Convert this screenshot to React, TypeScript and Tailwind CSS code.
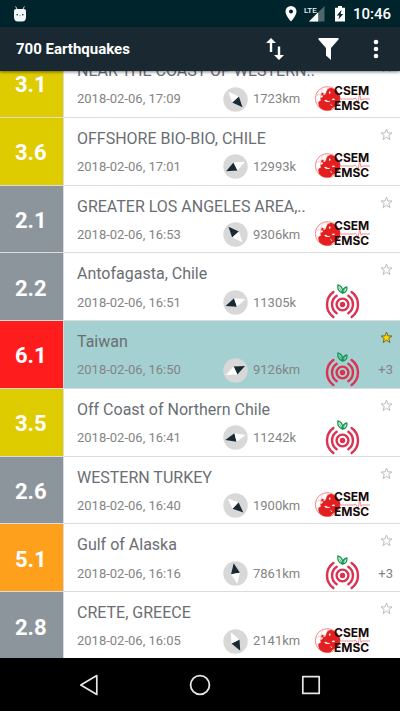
import React from "react";

type Source = "emsc" | "tomato";

interface Quake {
  mag: string;
  color: string;
  place: string;
  time: string;
  bearing: number;
  distance: string;
  source: Source;
  more?: string;
  starred?: boolean;
}

const YELLOW = "bg-[#dfcc00]";
const GRAY = "bg-[#8d959c]";
const RED = "bg-[#ff1c1c]";
const ORANGE = "bg-[#ffa01c]";

const quakes: Quake[] = [
  { mag: "3.1", color: YELLOW, place: "NEAR THE COAST OF WESTERN..", time: "2018-02-06, 17:09", bearing: 138, distance: "1723km", source: "emsc" },
  { mag: "3.6", color: YELLOW, place: "OFFSHORE BIO-BIO, CHILE", time: "2018-02-06, 17:01", bearing: 243, distance: "12993k", source: "emsc" },
  { mag: "2.1", color: GRAY, place: "GREATER LOS ANGELES AREA,..", time: "2018-02-06, 16:53", bearing: 318, distance: "9306km", source: "emsc" },
  { mag: "2.2", color: GRAY, place: "Antofagasta, Chile", time: "2018-02-06, 16:51", bearing: 251, distance: "11305k", source: "tomato" },
  { mag: "6.1", color: RED, place: "Taiwan", time: "2018-02-06, 16:50", bearing: 65, distance: "9126km", source: "tomato", more: "+3", starred: true },
  { mag: "3.5", color: YELLOW, place: "Off Coast of Northern Chile", time: "2018-02-06, 16:41", bearing: 256, distance: "11242k", source: "tomato" },
  { mag: "2.6", color: GRAY, place: "WESTERN TURKEY", time: "2018-02-06, 16:40", bearing: 132, distance: "1900km", source: "emsc" },
  { mag: "5.1", color: ORANGE, place: "Gulf of Alaska", time: "2018-02-06, 16:16", bearing: 350, distance: "7861km", source: "tomato", more: "+3" },
  { mag: "2.8", color: GRAY, place: "CRETE, GREECE", time: "2018-02-06, 16:05", bearing: 153, distance: "2141km", source: "emsc" },
];

function Compass({ bearing }: { bearing: number }) {
  return (
    <svg width="25" height="25" viewBox="0 0 25 25" className="shrink-0" aria-hidden="true">
      <circle cx="12.5" cy="12.5" r="12.2" fill="#d8d8d8" />
      <g transform={`rotate(${bearing} 12.5 12.5)`}>
        <path d="M8 12.5 12.5 2 17 12.5Z" fill="#1a2a35" />
        <path d="M8 12.5 12.5 23 17 12.5Z" fill="#fff" />
      </g>
    </svg>
  );
}

function EmscLogo() {
  return (
    <svg width="56" height="27" viewBox="0 0 56 27" className="overflow-visible" role="img" aria-label="CSEM EMSC">
      <circle cx="12.3" cy="12.6" r="12" fill="none" stroke="#f08080" strokeWidth="0.9" />
      <path d="M1 9.5C7 7 18 6 24 8M.6 15.5C6 18 16 19 23 17M8 2C4.5 8 4.5 18 9 24.5M12.3 1V25" fill="none" stroke="#f5aaaa" strokeWidth="0.6" />
      <path
        d="M11.5 5 13 2.8 16 1.8 19 3 22 5 24.5 8.5 25.4 12 25 14.5 23 18.4 21 18.6 20.4 20.5 17.5 22 15.6 24.2 11.5 24.6 8.5 24 5.8 22.6 4 20.5 3.2 17.5 3.8 15.4 6 14.5 5.4 12 7.6 11 8.3 9 10.2 8.4 11 7Z"
        fill="#e3201f"
      />
      <path d="M6.5 7.2 8 6.4 8.8 8.2 7.6 9.8 6.2 9.6Z" fill="#e3201f" />
      <path d="M13.8 6.8 14.8 5 15.6 6.4 14.8 8.2ZM9 14.6 11 13.8 13 15.2 15 14.8 14.4 15.9 11.6 16.1ZM16.6 13.1 19 12.4 20.2 13.4 18 14.2ZM14.8 17.4 17.4 19.6 16.6 20Z" fill="#fff" />
      <path d="M24.5 13H39l1.2-1 1.3 1.4L43 18l1.6-10.5 1.4 6.7 1-1.2H55" fill="none" stroke="#ee7474" strokeWidth="0.8" />
      <g fill="#170a0a" fontFamily="Inter, 'Liberation Sans', sans-serif" fontSize="12" fontWeight="700">
        <text x="19" y="9">CSEM</text>
        <text x="19" y="24">EMSC</text>
      </g>
    </svg>
  );
}

function TomatoLogo() {
  return (
    <svg width="36" height="36" viewBox="0 0 36 36" role="img" aria-label="Earthquake network">
      <g fill="none" stroke="#dc3150" strokeWidth="2.4" strokeLinecap="round">
        <circle cx="17.5" cy="20.5" r="5.9" />
        <path d="M11.7 11.8A10.5 10.5 0 0 0 11.7 29.2" />
        <path d="M23.3 11.8A10.5 10.5 0 0 1 23.3 29.2" />
        <path d="M8.4 8A15.4 15.4 0 0 0 8.4 33" />
        <path d="M26.6 8A15.4 15.4 0 0 1 26.6 33" />
      </g>
      <circle cx="17.5" cy="20.5" r="2.7" fill="#dc3150" />
      <g fill="none" stroke="#16964f" strokeWidth="1.3" strokeLinejoin="round" strokeLinecap="round">
        <path d="M17.3 9C13.1 7.4 12.5 3.8 12.9.8c3.2 1 5.2 4 4.4 8.2Z" />
        <path d="M17.5 9C17.5 5.4 19.1 3.4 21.9 2.8c.5 3.2-.8 5.6-4.4 6.2Z" />
        <path d="M14.5 3.8l2.6 4.8M20.3 4.6 17.7 8.8" strokeWidth="0.7" />
      </g>
    </svg>
  );
}

function Star({ on }: { on?: boolean }) {
  return (
    <svg width="13" height="13" viewBox="0 0 13 13" aria-hidden="true">
      <path
        d="M6.5 1 7.9 4.9 12 5 8.8 7.5 9.9 11.6 6.5 9.2 3.1 11.6 4.2 7.5 1 5 5.1 4.9Z"
        fill={on ? "#ffd600" : "none"}
        stroke={on ? "#6e6a2c" : "#bcbcbc"}
        strokeWidth="1"
      />
    </svg>
  );
}

function QuakeRow({ q }: { q: Quake }) {
  return (
    <li className={`flex border-b border-[#dcdcdc] ${q.starred ? "bg-[#a4d0d1]" : "bg-white"}`}>
      <div className={`flex w-16 shrink-0 items-center border-r border-[#dcdcdc] pl-[15px] pt-1 text-[22px] leading-6 font-bold text-white ${q.color}`}>
        {q.mag}
      </div>
      <div className="min-w-0 flex-1 pt-2.5 pr-[7px] pl-[13px]">
        <div className="flex h-[22px] items-start justify-between">
          <h2 className="text-base leading-[22px] whitespace-nowrap text-[#6a6e73]">{q.place}</h2>
          <button type="button" aria-label="Favourite" aria-pressed={!!q.starred} className="shrink-0">
            <Star on={q.starred} />
          </button>
        </div>
        <div className="flex h-[34px] items-center text-[13px] text-[#848484]">
          <time className="w-[146px] shrink-0">{q.time}</time>
          <Compass bearing={q.bearing} />
          <span className="ml-[5px] w-[62px] shrink-0">{q.distance}</span>
          <span className="flex w-[55px] shrink-0 justify-center">
            {q.source === "emsc" ? <EmscLogo /> : <TomatoLogo />}
          </span>
          <span className="ml-auto">{q.more}</span>
        </div>
      </div>
    </li>
  );
}

function StatusBar() {
  return (
    <div className="flex h-[27px] shrink-0 items-center bg-[#00242c] pr-[9px] pl-[13px] text-white">
      <svg width="14" height="16" viewBox="0 0 14 16" aria-hidden="true">
        <path d="M2.6.4 4 3M11.4.4 10 3" stroke="#c8d4d6" strokeWidth="1" />
        <path d="M1 5Q1 3 3 3H11Q13 3 13 5V11Q13 15.6 9 15.6H5Q1 15.6 1 11Z" fill="#f2f6f6" />
        <circle cx="4.2" cy="8.8" r="0.8" fill="#00242c" />
        <circle cx="9.8" cy="8.8" r="0.8" fill="#00242c" />
        <path d="M6 9.6h2" stroke="#8fa3a6" strokeWidth="0.6" />
      </svg>
      <div className="ml-auto flex items-center">
        <svg width="12" height="16" viewBox="0 0 12 16" aria-hidden="true">
          <path fillRule="evenodd" d="M6 0A5.5 5.5 0 0 0 .5 5.5C.5 9.6 6 15.6 6 15.6S11.5 9.6 11.5 5.5A5.5 5.5 0 0 0 6 0ZM6 3.5a2 2 0 1 1 0 4 2 2 0 0 1 0-4Z" fill="#fff" />
        </svg>
        <svg width="20" height="16" viewBox="0 0 20 16" className="ml-2 overflow-visible" aria-label="LTE signal">
          <path d="M19.5 0V15.5H4Z" fill="#4e676c" />
          <path d="M13.2 6.3V15.5H4Z" fill="#fff" />
          <path d="M-1 0H11V7.5H-1Z" fill="#00242c" />
          <text x="-1" y="6.8" fontFamily="Roboto, sans-serif" fontSize="8" fontWeight="500" fill="#e8eeee">
            LTE
          </text>
        </svg>
        <svg width="12" height="16" viewBox="0 0 12 16" className="ml-[9px]" aria-hidden="true">
          <path d="M4 0H8V1.8H11V15.6H1V1.8H4Z" fill="#fff" />
          <path d="M7.6 3.8 2.8 9.4H5.4L4.4 13.6 9.2 8H6.6Z" fill="#00242c" />
        </svg>
        <span className="ml-[7px] text-[15px] leading-5 font-medium">10:46</span>
      </div>
    </div>
  );
}

function AppBar() {
  return (
    <header className="relative z-10 flex h-11 shrink-0 items-center bg-[#192831] pr-[19px] pl-4 text-white shadow-[0_1px_3px_rgba(0,0,0,0.5)]">
      <h1 className="text-[15px] leading-5 font-bold">700 Earthquakes</h1>
      <button type="button" aria-label="Sort" className="ml-auto">
        <svg width="20" height="22" viewBox="0 0 20 22">
          <path d="M6 14V3M14 8.5V19" fill="none" stroke="#fff" strokeWidth="2.4" />
          <path d="M6 0 11 5H1ZM14 22 9 17H19Z" fill="#fff" />
        </svg>
      </button>
      <button type="button" aria-label="Filter" className="ml-[33px]">
        <svg width="21" height="22" viewBox="0 0 21 22">
          <path d="M.5 0H20.5V1.6L13 10V22L8 17.5V10L.5 1.6Z" fill="#fff" />
        </svg>
      </button>
      <button type="button" aria-label="More options" className="ml-[31px]">
        <svg width="11" height="20" viewBox="0 0 11 20" fill="#fff">
          <circle cx="6" cy="3" r="2.3" />
          <circle cx="6" cy="10" r="2.3" />
          <circle cx="6" cy="17" r="2.3" />
        </svg>
      </button>
    </header>
  );
}

function NavBar() {
  return (
    <nav className="flex h-[53px] shrink-0 items-center bg-black px-[34px]">
      <button type="button" aria-label="Back" className="flex flex-1 justify-center">
        <svg width="22" height="22" viewBox="0 0 22 22" fill="none" stroke="#e6e6e6" strokeWidth="1.7" strokeLinejoin="round">
          <path d="M18.8 1.6V20.4L2.8 11Z" />
        </svg>
      </button>
      <button type="button" aria-label="Home" className="flex flex-1 justify-center">
        <svg width="22" height="22" viewBox="0 0 22 22" fill="none" stroke="#e6e6e6" strokeWidth="1.8">
          <circle cx="11" cy="11" r="9.4" />
        </svg>
      </button>
      <button type="button" aria-label="Recent apps" className="flex flex-1 justify-center">
        <svg width="22" height="22" viewBox="0 0 22 22" fill="none" stroke="#e6e6e6" strokeWidth="1.7" strokeLinejoin="round">
          <path d="M2.8 2.6H19.2V19.4H2.8Z" />
        </svg>
      </button>
    </nav>
  );
}

export default function App() {
  return (
    <div className="flex h-screen flex-col bg-white font-[Roboto,sans-serif]">
      <StatusBar />
      <AppBar />
      <main className="min-h-0 flex-1 overflow-hidden">
        <ul className="-mt-[21px] grid h-[610px] grid-rows-9">
          {quakes.map((q) => (
            <QuakeRow key={q.time} q={q} />
          ))}
        </ul>
      </main>
      <NavBar />
    </div>
  );
}
